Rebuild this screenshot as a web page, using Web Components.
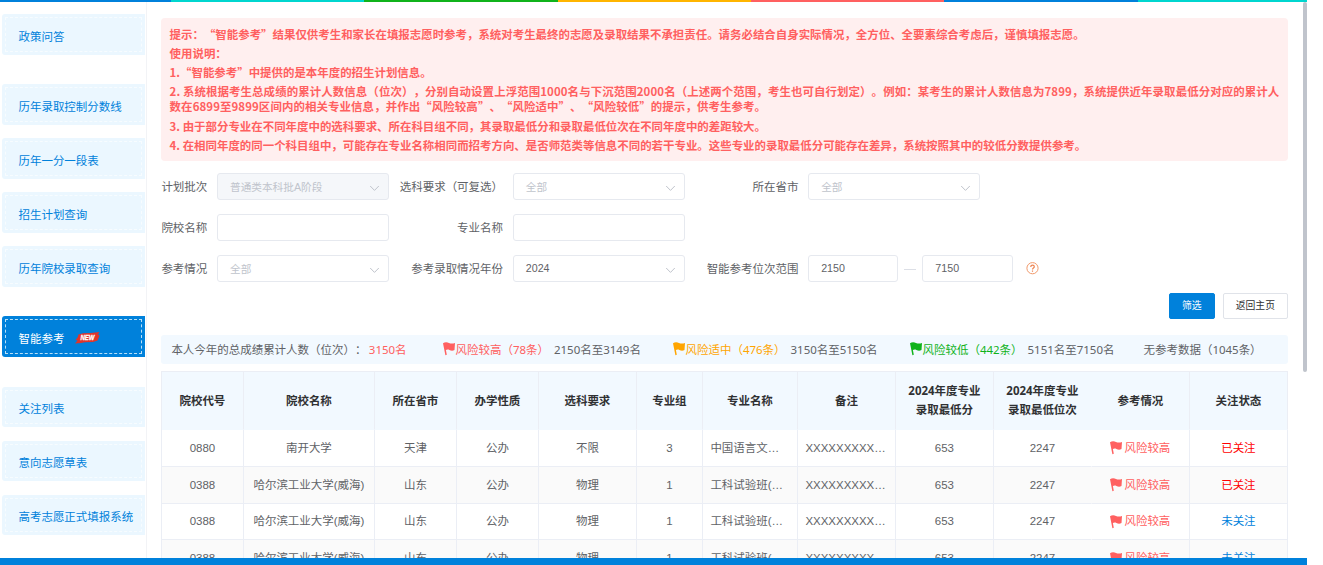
<!DOCTYPE html>
<html lang="zh-CN">
<head>
<meta charset="utf-8">
<title>智能参考</title>
<style>
  body {
    margin: 0;
    height: 565px;
    overflow: hidden;
    background: #fff;
    color: #606266;
    font: 11.48px/15px "Noto Sans", "Noto Sans CJK SC", sans-serif;
    text-spacing-trim: space-all;
    --blue: #0081db;
    --red: #ff6060;
    --line: #ebeef5;
  }
</style>
</head>
<body>
<page-shell>
  <side-nav slot="nav">
    <nav-item>政策问答</nav-item>
    <nav-item class="group">历年录取控制分数线</nav-item>
    <nav-item>历年一分一段表</nav-item>
    <nav-item>招生计划查询</nav-item>
    <nav-item>历年院校录取查询</nav-item>
    <nav-item class="group" active>智能参考<new-badge></new-badge></nav-item>
    <nav-item class="group">关注列表</nav-item>
    <nav-item>意向志愿草表</nav-item>
    <nav-item>高考志愿正式填报系统</nav-item>
  </side-nav>

  <notice-box></notice-box>

  <filter-form>
    <form-field label="计划批次"><select-box disabled>普通类本科批A阶段</select-box></form-field>
    <form-field label="选科要求（可复选）"><select-box>全部</select-box></form-field>
    <form-field label="所在省市"><select-box>全部</select-box></form-field>
    <form-field label="院校名称"><text-box></text-box></form-field>
    <form-field label="专业名称"><text-box></text-box></form-field>
    <span></span>
    <form-field label="参考情况"><select-box>全部</select-box></form-field>
    <form-field label="参考录取情况年份"><select-box filled>2024</select-box></form-field>
    <form-field label="智能参考位次范围"><range-box from="2150" to="7150"></range-box></form-field>
  </filter-form>

  <button-row>
    <action-button primary>筛选</action-button>
    <action-button>返回主页</action-button>
  </button-row>

  <stat-bar>
    <span>本人今年的总成绩累计人数（位次）：<b>3150名</b></span>
    <risk-stat level="high" range="2150名至3149名">风险较高（78条）</risk-stat>
    <risk-stat level="mid" range="3150名至5150名">风险适中（476条）</risk-stat>
    <risk-stat level="low" range="5151名至7150名">风险较低（442条）</risk-stat>
    <span>无参考数据（1045条）</span>
  </stat-bar>

  <result-table></result-table>
</page-shell>

<script>
class BaseElement extends HTMLElement {
  constructor() {
    super();
    this.attachShadow({ mode: "open" });
  }
  connectedCallback() {
    this.shadowRoot.innerHTML = this.render();
  }
}

customElements.define("page-shell", class extends BaseElement {
  render() {
    return `
      <style>
        :host { display: flex; flex-direction: column; width: 1307px; height: 565px; position: relative; overflow: hidden; }
        .stripe {
          flex: 0 0 2px;
          background: linear-gradient(90deg, #0081db 171px, #00d6cf 171px 364px, #10b31b 364px 558px,
            #ffb500 558px 751px, #ff6060 751px 944.5px, #0081db 944.5px 1138px, #00d6cf 1138px);
        }
        .body { flex: 1; min-height: 0; display: flex; }
        main { flex: 1; min-width: 0; overflow: hidden; padding: 16px 19px 0 14.4px; }
        footer { flex: 0 0 7.5px; background: var(--blue); }
        .scroll { position: absolute; right: 0; top: 2px; width: 4px; height: 370px; border-radius: 2px; background: #c0c4cc; }
      </style>
      <div class="stripe"></div>
      <div class="body">
        <slot name="nav"></slot>
        <main><slot></slot></main>
      </div>
      <footer></footer>
      <div class="scroll"></div>
    `;
  }
});

customElements.define("side-nav", class extends BaseElement {
  render() {
    return `
      <style>
        :host { display: flex; flex-direction: column; box-sizing: border-box; width: 147px; padding: 12px 1px 0 2px; border-right: 1px solid #f2f3f6; }
        ::slotted(nav-item) { margin-bottom: 13.2px; }
        ::slotted(nav-item.group) { margin-top: 16.2px; }
        ::slotted(nav-item[active]) { margin-bottom: 13.4px; }
      </style>
      <slot></slot>
    `;
  }
});

customElements.define("nav-item", class extends BaseElement {
  render() {
    return `
      <style>
        :host {
          display: flex; box-sizing: border-box; height: 40.8px; flex: none; padding: 3px;
          width: 143px; border-radius: 3px 0 0 3px; background: #ebf7ff; color: var(--blue);
        }
        div {
          flex: 1; display: flex; align-items: center; box-sizing: border-box; padding: 3.6px 0 0 12.5px;
          border: 1px dashed #f7fcff; white-space: nowrap;
        }
        :host([active]) { background: var(--blue); color: #fff; }
        :host([active]) div { border-color: #b9e0f8; }
      </style>
      <div><slot></slot></div>
    `;
  }
});

customElements.define("new-badge", class extends BaseElement {
  render() {
    return `
      <style>
        :host { display: block; margin-left: 11px; width: 25px; height: 12px; }
        svg { display: block; }
      </style>
      <svg width="25" height="12" viewBox="0 0 25 12">
        <path d="M3.4 2.4 L8 1.2 L16 1 L24.4 0 L23 2.6 L24.6 3.6 L22.6 8.4 L18 10 L10 10.2 L6 11 L0 11.6 L2.6 8.6 L.6 8 L2.8 5 Z" fill="#e0352b"/>
        <text x="5.4" y="8.3" font-family="Liberation Sans" font-size="7" font-weight="bold" font-style="italic" fill="#fff" stroke="#fff" stroke-width=".3" textLength="14" lengthAdjust="spacingAndGlyphs">NEW</text>
      </svg>
    `;
  }
});

customElements.define("notice-box", class extends BaseElement {
  render() {
    const lines = [
      "提示：“智能参考”结果仅供考生和家长在填报志愿时参考，系统对考生最终的志愿及录取结果不承担责任。请务必结合自身实际情况，全方位、全要素综合考虑后，谨慎填报志愿。",
      "使用说明：",
      "1.“智能参考”中提供的是本年度的招生计划信息。",
      "2. 系统根据考生总成绩的累计人数信息（位次），分别自动设置上浮范围1000名与下沉范围2000名（上述两个范围，考生也可自行划定）。例如：某考生的累计人数信息为7899，系统提供近年录取最低分对应的累计人数在6899至9899区间内的相关专业信息，并作出“风险较高”、“风险适中”、“风险较低”的提示，供考生参考。",
      "3. 由于部分专业在不同年度中的选科要求、所在科目组不同，其录取最低分和录取最低位次在不同年度中的差距较大。",
      "4. 在相同年度的同一个科目组中，可能存在专业名称相同而招考方向、是否师范类等信息不同的若干专业。这些专业的录取最低分可能存在差异，系统按照其中的较低分数提供参考。",
    ];
    return `
      <style>
        :host {
          display: block; box-sizing: border-box; height: 143px; padding: 9px 4px 0 8.2px; border-radius: 4px;
          background: #ffefef; color: var(--red); font: bold 11.45px "Noto Sans CJK SC", sans-serif;
        }
        p { margin: 0 0 3.9px; line-height: 15.2px; }
        p:nth-of-type(4) { letter-spacing: .09px; }
      </style>
      ${lines.map((l) => `<p>${l}</p>`).join("")}
    `;
  }
});

customElements.define("filter-form", class extends BaseElement {
  render() {
    return `
      <style>
        :host { display: grid; grid-template-columns: 227.8px 295.4px 1fr; grid-auto-rows: 27px; row-gap: 14px; padding-top: 12px; }
      </style>
      <slot></slot>
    `;
  }
});

customElements.define("form-field", class extends BaseElement {
  render() {
    return `
      <style>
        :host { display: flex; align-items: center; }
        label { flex: none; text-align: right; white-space: nowrap; padding-right: 9.8px; box-sizing: border-box; }
        :host(:nth-child(3n + 1)) label { width: 55.6px; }
        :host(:nth-child(3n + 2)) label { width: 123.6px; }
        :host(:nth-child(3n)) label { width: 123.6px; }
      </style>
      <label>${this.getAttribute("label")}</label>
      <slot></slot>
    `;
  }
});

const boxStyle = `
  display: flex; align-items: center; justify-content: space-between; box-sizing: border-box;
  width: 172px; height: 27px; padding: 0 8px 0 12px; border: 1px solid #e6e9ef; border-radius: 3px;
  background: #fff; font-family: "Liberation Sans", "Noto Sans CJK SC", sans-serif; font-size: 10.66px;
`;

customElements.define("select-box", class extends BaseElement {
  render() {
    return `
      <style>
        :host { ${boxStyle} color: #c0c4cc; }
        :host([disabled]) { background: #f5f7fa; }
        :host([filled]) { color: #606266; }
        :host([filled]) span { padding-top: 0; }
        span { padding-top: 1px; }
        svg { margin-top: 3px; }
      </style>
      <span><slot></slot></span>
      <svg width="11" height="7" viewBox="0 0 11 7" fill="none" stroke="#c0c4cc"><path d="M1.2 1 5.5 5.4 9.8 1"/></svg>
    `;
  }
});

customElements.define("text-box", class extends BaseElement {
  render() {
    return `<style>:host { ${boxStyle} }</style><slot></slot>`;
  }
});

customElements.define("range-box", class extends BaseElement {
  render() {
    return `
      <style>
        :host { display: flex; align-items: center; }
        text-box { width: 90.2px; }
        i { width: 12px; height: 1px; margin: 2px 6px 0; background: #dcdfe6; }
        svg { margin-left: 13px; }
      </style>
      <text-box>${this.getAttribute("from")}</text-box>
      <i></i>
      <text-box>${this.getAttribute("to")}</text-box>
      <svg width="13" height="13" viewBox="0 0 13 13" fill="none" stroke="#f19a6c">
        <circle cx="6.5" cy="6.2" r="5.6"/>
        <path d="M4.8 4.9C4.8 2.5 8.3 2.6 8.3 4.8 8.3 6.1 6.5 6.1 6.5 7.5M6.5 8.5V9.7" stroke="#ee8350" stroke-width="1.2"/>
      </svg>
    `;
  }
});

customElements.define("button-row", class extends BaseElement {
  render() {
    return `
      <style>:host { display: flex; justify-content: flex-end; gap: 8px; padding: 11px 0 16px; }</style>
      <slot></slot>
    `;
  }
});

customElements.define("action-button", class extends BaseElement {
  render() {
    return `
      <style>
        :host {
          display: block; box-sizing: border-box; height: 26px; padding: 4px 12px 0; border: 1px solid #e0e3e9;
          border-radius: 2px; font-size: 9.84px; line-height: 15px; color: #303133;
        }
        :host([primary]) { background: var(--blue); border-color: var(--blue); color: #fff; }
      </style>
      <slot></slot>
    `;
  }
});

const riskColors = { high: "#ff6060", mid: "#ffa500", low: "#10b31b" };

customElements.define("flag-icon", class extends BaseElement {
  render() {
    return `
      <style>:host { display: inline-block; width: 13px; height: 14px; } svg { display: block; }</style>
      <svg width="13" height="14" viewBox="0 0 13 14" fill="currentColor">
        <path d="M0 1.2C1.8-.2 4.2-.1 6 .9 7.8 1.9 9.8 1.7 12 1L11.5 8C9.6 9 8 8.8 6.4 7.9 5.2 7.2 4.1 7.3 2.9 7.9L3.8 12.8 2.4 13.2Z"/>
      </svg>
    `;
  }
});

customElements.define("risk-stat", class extends BaseElement {
  render() {
    return `
      <style>
        :host { display: flex; align-items: center; white-space: nowrap; }
        .level { display: flex; align-items: center; color: ${riskColors[this.getAttribute("level")]}; }
        flag-icon { margin-top: -1px; }
        .range { margin-left: 5px; }
      </style>
      <span class="level"><flag-icon></flag-icon><span><slot></slot></span></span>
      <span class="range">${this.getAttribute("range")}</span>
    `;
  }
});

customElements.define("stat-bar", class extends BaseElement {
  render() {
    return `
      <style>
        :host {
          display: grid; grid-template-columns: 271.2px 230px 237px 234px 1fr; align-items: center; box-sizing: border-box;
          height: 29px; padding: 0 0 0 10px; border-radius: 3px; background: #f2f9ff; white-space: nowrap;
        }
        ::slotted(span) { display: flex; }
      </style>
      <slot></slot>
    `;
  }
  connectedCallback() {
    super.connectedCallback();
    const own = this.querySelector("b");
    own.style.cssText = "font-weight: normal; color: var(--red); margin-left: 2.5px";
  }
});

customElements.define("result-table", class extends BaseElement {
  render() {
    const heads = ["院校代号", "院校名称", "所在省市", "办学性质", "选科要求", "专业组", "专业名称", "备注",
      "2024年度专业<br>录取最低分", "2024年度专业<br>录取最低位次", "参考情况", "关注状态"];
    const widths = [82, 131, 82, 82, 98, 66, 95, 98, 98, 98, 98, 98];
    const risk = `<span class="risk"><flag-icon></flag-icon>风险较高</span>`;
    const followed = `<span class="on">已关注</span>`;
    const notFollowed = `<span class="off">未关注</span>`;
    const harbin = ["0388", "哈尔滨工业大学(威海)", "山东", "公办", "物理", "1", "工科试验班(…", "XXXXXXXXX…", "653", "2247", risk];
    const rows = [
      ["0880", "南开大学", "天津", "公办", "不限", "3", "中国语言文…", "XXXXXXXXX…", "653", "2247", risk, followed],
      [...harbin, followed],
      [...harbin, notFollowed],
      [...harbin, notFollowed],
    ];
    return `
      <style>
        :host { display: block; margin-top: 7px; }
        table { width: 1127px; table-layout: fixed; border-collapse: separate; border-spacing: 0; border: solid var(--line); border-width: 1px 0 0 1px; }
        th, td { box-sizing: border-box; padding: 0 1px 0 0; border: solid var(--line); border-width: 0 1px 1px 0; text-align: center; white-space: nowrap; }
        th { height: 58px; padding-bottom: 1px; background: #f2f9ff; color: #303133; line-height: 19px; border-bottom-color: #f2f9ff; }
        td { height: 36.8px; padding-top: 1px; font-family: "Liberation Sans", "Noto Sans CJK SC", sans-serif; }
        td:nth-child(7), td:nth-child(8) { padding-left: 7px; text-align: left; }
        th:nth-child(11), td:nth-child(11) { border-left: 0; }
        th:nth-child(10), td:nth-child(10) { border-right-color: transparent; }
        tr:nth-child(even) td { background: #fafafa; }
        .risk { display: flex; align-items: center; justify-content: center; gap: 1px; color: var(--red); }
        .on { color: #f00; }
        .off { color: var(--blue); }
      </style>
      <table>
        <colgroup>${widths.map((w) => `<col style="width: ${w}px">`).join("")}</colgroup>
        <thead><tr>${heads.map((h) => `<th>${h}</th>`).join("")}</tr></thead>
        <tbody>${rows.map((r) => `<tr>${r.map((c) => `<td>${c}</td>`).join("")}</tr>`).join("")}</tbody>
      </table>
    `;
  }
});
</script>
</body>
</html>
